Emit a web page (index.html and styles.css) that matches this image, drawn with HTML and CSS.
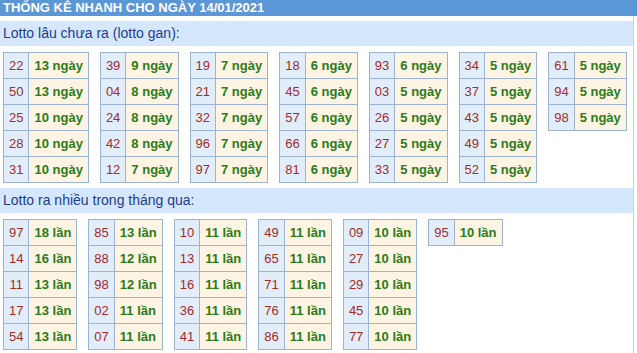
FILE: index.html
```html
<!DOCTYPE html>
<html lang="vi">
<head>
<meta charset="utf-8">
<title>Thống kê nhanh</title>
<link rel="stylesheet" href="styles.css">
</head>
<body>
<div class="title">THỐNG KÊ NHANH CHO NGÀY 14/01/2021</div>
<div class="wrap">
  <div class="band">Lotto lâu chưa ra (lotto gan):</div>
  <div class="group">
    <table><tr><td class="n">22</td><td class="v">13 ngày</td></tr><tr><td class="n">50</td><td class="v">13 ngày</td></tr><tr><td class="n">25</td><td class="v">10 ngày</td></tr><tr><td class="n">28</td><td class="v">10 ngày</td></tr><tr><td class="n">31</td><td class="v">10 ngày</td></tr></table>
    <table><tr><td class="n">39</td><td class="v">9 ngày</td></tr><tr><td class="n">04</td><td class="v">8 ngày</td></tr><tr><td class="n">24</td><td class="v">8 ngày</td></tr><tr><td class="n">42</td><td class="v">8 ngày</td></tr><tr><td class="n">12</td><td class="v">7 ngày</td></tr></table>
    <table><tr><td class="n">19</td><td class="v">7 ngày</td></tr><tr><td class="n">21</td><td class="v">7 ngày</td></tr><tr><td class="n">32</td><td class="v">7 ngày</td></tr><tr><td class="n">96</td><td class="v">7 ngày</td></tr><tr><td class="n">97</td><td class="v">7 ngày</td></tr></table>
    <table><tr><td class="n">18</td><td class="v">6 ngày</td></tr><tr><td class="n">45</td><td class="v">6 ngày</td></tr><tr><td class="n">57</td><td class="v">6 ngày</td></tr><tr><td class="n">66</td><td class="v">6 ngày</td></tr><tr><td class="n">81</td><td class="v">6 ngày</td></tr></table>
    <table><tr><td class="n">93</td><td class="v">6 ngày</td></tr><tr><td class="n">03</td><td class="v">5 ngày</td></tr><tr><td class="n">26</td><td class="v">5 ngày</td></tr><tr><td class="n">27</td><td class="v">5 ngày</td></tr><tr><td class="n">33</td><td class="v">5 ngày</td></tr></table>
    <table><tr><td class="n">34</td><td class="v">5 ngày</td></tr><tr><td class="n">37</td><td class="v">5 ngày</td></tr><tr><td class="n">43</td><td class="v">5 ngày</td></tr><tr><td class="n">49</td><td class="v">5 ngày</td></tr><tr><td class="n">52</td><td class="v">5 ngày</td></tr></table>
    <table><tr><td class="n">61</td><td class="v">5 ngày</td></tr><tr><td class="n">94</td><td class="v">5 ngày</td></tr><tr><td class="n">98</td><td class="v">5 ngày</td></tr></table>
  </div>
  <div class="band">Lotto ra nhiều trong tháng qua:</div>
  <div class="group">
    <table><tr><td class="n">97</td><td class="v">18 lần</td></tr><tr><td class="n">14</td><td class="v">16 lần</td></tr><tr><td class="n">11</td><td class="v">13 lần</td></tr><tr><td class="n">17</td><td class="v">13 lần</td></tr><tr><td class="n">54</td><td class="v">13 lần</td></tr></table>
    <table><tr><td class="n">85</td><td class="v">13 lần</td></tr><tr><td class="n">88</td><td class="v">12 lần</td></tr><tr><td class="n">98</td><td class="v">12 lần</td></tr><tr><td class="n">02</td><td class="v">11 lần</td></tr><tr><td class="n">07</td><td class="v">11 lần</td></tr></table>
    <table><tr><td class="n">10</td><td class="v">11 lần</td></tr><tr><td class="n">13</td><td class="v">11 lần</td></tr><tr><td class="n">16</td><td class="v">11 lần</td></tr><tr><td class="n">36</td><td class="v">11 lần</td></tr><tr><td class="n">41</td><td class="v">11 lần</td></tr></table>
    <table><tr><td class="n">49</td><td class="v">11 lần</td></tr><tr><td class="n">65</td><td class="v">11 lần</td></tr><tr><td class="n">71</td><td class="v">11 lần</td></tr><tr><td class="n">76</td><td class="v">11 lần</td></tr><tr><td class="n">86</td><td class="v">11 lần</td></tr></table>
    <table><tr><td class="n">09</td><td class="v">10 lần</td></tr><tr><td class="n">27</td><td class="v">10 lần</td></tr><tr><td class="n">29</td><td class="v">10 lần</td></tr><tr><td class="n">45</td><td class="v">10 lần</td></tr><tr><td class="n">77</td><td class="v">10 lần</td></tr></table>
    <table><tr><td class="n">95</td><td class="v">10 lần</td></tr></table>
  </div>
</div>
</body>
</html>
```

FILE: styles.css
```css
html, body {
  margin: 0;
  padding: 0;
  background: #ffffff;
  font-family: "Liberation Sans", Arial, sans-serif;
}

.title {
  height: 16px;
  line-height: 16px;
  padding-left: 3px;
  background: #5b96d6;
  color: #ffffff;
  font-size: 13px;
  font-weight: bold;
  white-space: nowrap;
}

.wrap {
  width: 633px;
  height: 332px;
  padding-top: 5px;
  border-right: 1px solid #c3d3ea;
}

.band {
  height: 25px;
  line-height: 25px;
  padding-left: 3px;
  background: #d5e7fa;
  color: #1d3c90;
  font-size: 14px;
}

.group {
  display: flex;
  align-items: flex-start;
  gap: 11px;
  padding: 6px 3px 5px;
}

table {
  border-collapse: collapse;
}

td {
  height: 25px;
  padding: 0 5px;
  border: 1px solid #9db3d6;
  font-size: 13px;
  white-space: nowrap;
}

.n {
  background: #e1edf9;
  color: #a32b2b;
  text-align: center;
}

.v {
  background: #fdf4e4;
  color: #2b7b19;
  font-weight: bold;
}
```
